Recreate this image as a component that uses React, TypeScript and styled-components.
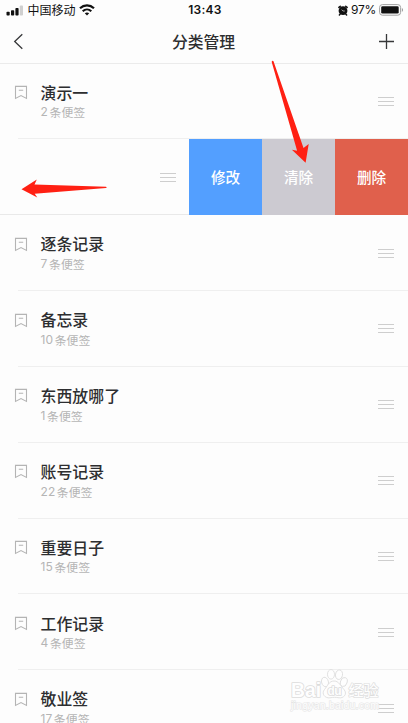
import React from "react";
import styled, { createGlobalStyle } from "styled-components";

const GlobalStyle = createGlobalStyle`
  * { box-sizing: border-box; }
  body { margin: 0; background: #fdfdfd; }
`;

const Screen = styled.main`
  position: relative;
  width: 408px;
  height: 723px;
  overflow: hidden;
  background: #fdfdfd;
  color: #2d2e30;
  font-family: "Inter", "Noto Sans CJK SC", sans-serif;
`;

const StatusBar = styled.div`
  display: grid;
  grid-template-columns: 1fr auto 1fr;
  align-items: center;
  height: 20px;
  padding: 0 4px 0 6px;
  color: #111;
`;

const StatusGroup = styled.div<{ $end?: boolean }>`
  display: flex;
  align-items: center;
  justify-content: ${(p) => (p.$end ? "flex-end" : "flex-start")};
  gap: ${(p) => (p.$end ? "3px" : "3.5px")};
  svg { flex: none; }
`;

const Carrier = styled.span`
  font: 400 12px/20px "Noto Sans CJK SC", sans-serif;
`;

const Clock = styled.time`
  font-size: 12px;
  font-weight: 600;
  letter-spacing: 0.25px;
  line-height: 20px;
`;

const Percent = styled.span`
  font-size: 12px;
  line-height: 20px;
  letter-spacing: -0.3px;
`;

const NavBar = styled.header`
  display: grid;
  grid-template-columns: 1fr auto 1fr;
  align-items: center;
  height: 44px;
  padding: 0 13px 0 12px;
  border-bottom: 1px solid #ebebeb;
`;

const NavTitle = styled.h1`
  margin: 0;
  font: 500 15.8px/42px "Noto Sans CJK SC", sans-serif;
`;

const IconButton = styled.button<{ $end?: boolean }>`
  display: flex;
  justify-self: ${(p) => (p.$end ? "end" : "start")};
  padding: 0;
  border: 0;
  background: none;
  color: #37383a;
`;

const List = styled.div`
  display: flex;
  flex-direction: column;
  margin-top: -0.6px;
`;

const Row = styled.section`
  display: flex;
  flex: none;
  height: 75.86px;
  padding: 0 14px 0 14px;
`;

const Divider = styled.div`
  flex: none;
  height: 1px;
  margin: -1px 0 0 18px;
  background: #efefef;
`;

const Mark = styled.div`
  flex: none;
  width: 26.6px;
  padding-top: 20.6px;
`;

const RowText = styled.div`
  flex: 1;
  padding-top: 17.1px;
`;

const RowTitle = styled.h2`
  margin: 0;
  font: 500 15.9px/24px "Noto Sans CJK SC", sans-serif;
`;

const Count = styled.div`
  display: flex;
  gap: 1.6px;
  height: 16px;
  margin-top: -0.3px;
  color: #b5b5b5;
  font-size: 12px;
  line-height: 16px;
`;

const CountLabel = styled.span`
  font: 400 11.9px/16px "Noto Sans CJK SC", sans-serif;
`;

const Handle = styled.div`
  display: flex;
  flex-direction: column;
  align-self: center;
  gap: 3px;
  width: 16px;
  span { height: 1px; background: #cecece; }
`;

const SwipedRow = styled.section`
  display: flex;
  flex: none;
  height: 75.86px;
`;

const SwipedContent = styled.div`
  display: flex;
  flex: none;
  justify-content: flex-end;
  width: 189px;
  padding: 1px 13px 0 0;
  border-bottom: 1px solid #e9e9e9;
`;

const Action = styled.button<{ $color: string }>`
  flex: 1;
  padding: 0;
  border: 0;
  background: ${(p) => p.$color};
  color: #fff;
  font: 500 14.6px/24px "Noto Sans CJK SC", sans-serif;
`;

const Overlay = styled.svg`
  position: absolute;
  inset: 0;
  pointer-events: none;
`;

const SignalIcon = () => (
  <svg width="18" height="11" viewBox="0 0 18 11" fill="#111">
    <rect x="0.5" y="6.8" width="3.2" height="3.7" rx="0.8" />
    <rect x="5" y="5.2" width="3.2" height="5.3" rx="0.8" />
    <rect x="9.4" y="3" width="3.2" height="7.5" rx="0.8" />
    <rect x="13.8" y="0.5" width="3.2" height="10" rx="0.8" fill="#cfcfcf" />
  </svg>
);

const WifiIcon = () => (
  <svg width="16" height="12" viewBox="0 0 16 12" fill="none" stroke="#111" strokeWidth="2.2">
    <path d="M1 4.3C5 .5 11 .5 15 4.3M3.7 7.2c2.5-2.3 6.1-2.3 8.6 0" />
    <path d="M5.8 9.3c1.3-1.2 3.1-1.2 4.4 0L8 11.5z" fill="#111" stroke="none" />
  </svg>
);

const AlarmIcon = () => (
  <svg width="10" height="11" viewBox="0 0 10 11">
    <circle cx="5" cy="5.7" r="4.4" fill="#111" />
    <path d="M.9 2.4 2.3 1.2M9.1 2.4 7.7 1.2M2.2 9 1.4 9.9M7.8 9l.8.9" stroke="#111" strokeWidth="1.5" strokeLinecap="round" />
    <path d="M5 6h1.8M5 6 3.6 4.7" stroke="#ddd" strokeWidth="0.7" fill="none" />
  </svg>
);

const BatteryIcon = () => (
  <svg width="25" height="12" viewBox="0 0 25 12">
    <rect x="0.6" y="0.6" width="21" height="10.6" rx="2.8" fill="none" stroke="#a0a0a0" />
    <rect x="2.2" y="2.2" width="17.5" height="7.4" rx="1.3" fill="#111" />
    <path d="M22.9 3.9c1.5.8 1.5 3.1 0 4z" fill="#999" />
  </svg>
);

const BookmarkIcon = () => (
  <svg width="14" height="15" viewBox="0 0 14 15" fill="none" stroke="#b4b4b4" strokeWidth="1.1">
    <path d="M1.5 1.4h11v12L7 10.5l-5.5 2.9zM4.8 5.3h4.4" />
  </svg>
);

const DragHandle = () => (
  <Handle aria-hidden="true"><span /><span /><span /></Handle>
);

type Category = { title: string; count: number };

const categories: Category[] = [
  { title: "逐条记录", count: 7 },
  { title: "备忘录", count: 10 },
  { title: "东西放哪了", count: 1 },
  { title: "账号记录", count: 22 },
  { title: "重要日子", count: 15 },
  { title: "工作记录", count: 4 },
  { title: "敬业签", count: 17 },
];

const CategoryRow = ({ title, count }: Category) => (
  <>
    <Row>
      <Mark><BookmarkIcon /></Mark>
      <RowText>
        <RowTitle>{title}</RowTitle>
        <Count>{count}<CountLabel>条便签</CountLabel></Count>
      </RowText>
      <DragHandle />
    </Row>
    <Divider />
  </>
);

const Annotations = () => (
  <Overlay width="408" height="723" viewBox="0 0 408 723">
    <g fill="#ff2013">
      <path d="M272 61q.8-.8 1.5.2L303.5 148l5.2-4-3.1 18.7-13.7-12.9 5.2 1L271.7 62z" />
      <path d="M21.5 189.2 36.8 179.5 34.5 184.4 106 186.8q1.6.7 0 1.2L34.7 193.7 37.3 197.5z" />
    </g>
  </Overlay>
);

const Watermark = () => (
  <Overlay width="408" height="723" viewBox="0 0 408 723">
    <g fill="#fefefe" stroke="#dedede" strokeWidth="0.9">
      <ellipse cx="325" cy="682" rx="3.4" ry="4.8" transform="rotate(-15 325 682)" />
      <ellipse cx="331" cy="674.3" rx="3.5" ry="4.8" />
      <ellipse cx="339" cy="674.7" rx="3.5" ry="4.8" transform="rotate(10 339 674.7)" />
      <ellipse cx="343.8" cy="682" rx="3.3" ry="4.6" transform="rotate(18 343.8 682)" />
      <path d="M334 681c5 0 6.5 5 10 8.5 4 5-1 9-5 8.3-3-.6-6-.6-9 0-5 .7-9-4-5.5-8.3 3-3.5 4.5-8.5 9.5-8.5z" />
    </g>
    <g fill="#fefefe" stroke="#dcdcdc" strokeWidth="1.7" strokeLinejoin="round" paintOrder="stroke">
      <text x="291" y="697" fontFamily="Liberation Sans, sans-serif" fontSize="20" fontWeight="700" textLength="30" lengthAdjust="spacingAndGlyphs">Bai</text>
      <text x="327.5" y="695.3" fontFamily="Liberation Sans, sans-serif" fontSize="12" fontWeight="700" textLength="14">du</text>
      <text x="348.5" y="696" fontFamily="Noto Sans CJK SC, sans-serif" fontSize="15" fontWeight="500" strokeWidth="1.3" textLength="30">经验</text>
    </g>
    <text x="291" y="708.5" fill="#fefefe" stroke="#e5e5e5" strokeWidth="1.2" paintOrder="stroke" fontFamily="Liberation Sans, sans-serif" fontSize="10.5" textLength="88">jingyan.baidu.com</text>
  </Overlay>
);

export default function App() {
  return (
    <Screen>
      <GlobalStyle />
      <StatusBar>
        <StatusGroup><SignalIcon /><Carrier>中国移动</Carrier><WifiIcon /></StatusGroup>
        <Clock>13:43</Clock>
        <StatusGroup $end><AlarmIcon /><Percent>97%</Percent><BatteryIcon /></StatusGroup>
      </StatusBar>
      <NavBar>
        <IconButton aria-label="返回">
          <svg width="12" height="17" viewBox="0 0 12 17" fill="none" stroke="currentColor" strokeWidth="1.3"><path d="M10.3 1.2 2.7 8.5l7.6 7.3" /></svg>
        </IconButton>
        <NavTitle>分类管理</NavTitle>
        <IconButton $end aria-label="添加">
          <svg width="17" height="17" viewBox="0 0 17 17" fill="none" stroke="currentColor" strokeWidth="1.3"><path d="M8.5 1v15M1 8.5h15" /></svg>
        </IconButton>
      </NavBar>
      <List>
        <CategoryRow title="演示一" count={2} />
        <SwipedRow>
          <SwipedContent><DragHandle /></SwipedContent>
          <Action $color="#539fff">修改</Action>
          <Action $color="#cccad1">清除</Action>
          <Action $color="#e0604c">删除</Action>
        </SwipedRow>
        {categories.map((item) => <CategoryRow key={item.title} {...item} />)}
      </List>
      <Watermark />
      <Annotations />
    </Screen>
  );
}
